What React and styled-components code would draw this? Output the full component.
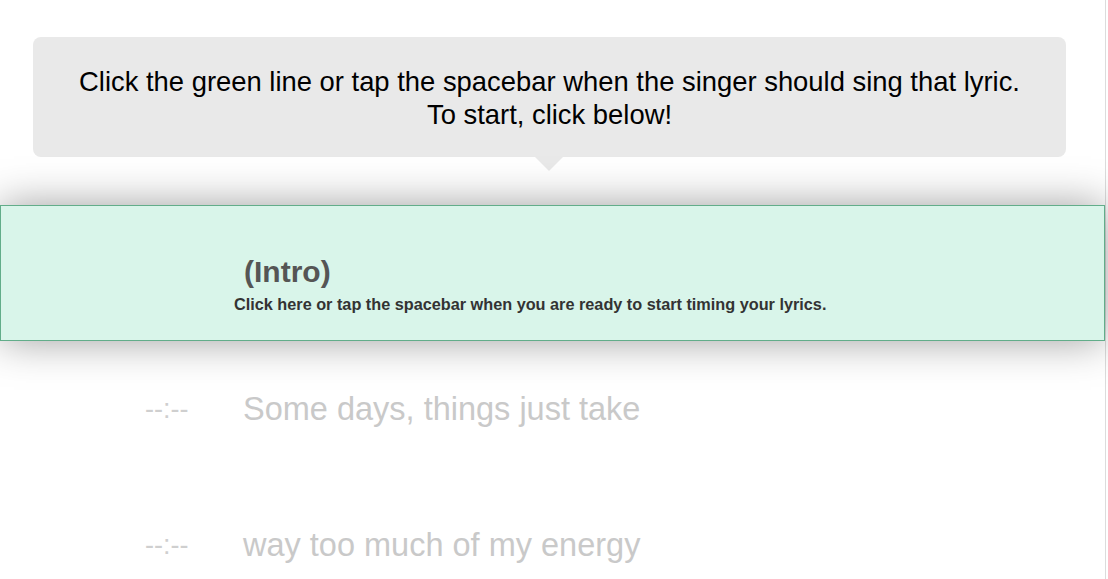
import React from 'react';
import styled, { createGlobalStyle } from 'styled-components';

const GlobalStyle = createGlobalStyle`
  html, body {
    margin: 0;
    padding: 0;
    overflow: hidden;
    background: #fff;
    font-family: "Liberation Sans", Arial, sans-serif;
  }
`;

const Page = styled.div`
  width: 1105px;
  min-height: 100vh;
  border-right: 1px solid #dcdcdc;
  padding-top: 37px;
`;

const Bubble = styled.div`
  position: relative;
  width: 1033px;
  margin-left: 33px;
  box-sizing: border-box;
  padding: 28px 10px 26px;
  background: #e9e9e9;
  border-radius: 8px;
  text-align: center;
  font-size: 27.4px;
  line-height: 33px;
  color: #000;

  &::after {
    content: '';
    position: absolute;
    left: 50%;
    bottom: -14px;
    margin-left: -15px;
    border-left: 14px solid transparent;
    border-right: 14px solid transparent;
    border-top: 14px solid #e9e9e9;
  }
`;

const Lines = styled.div`
  margin-top: 48px;
`;

const ActiveRow = styled.div`
  position: relative;
  z-index: 1;
  height: 136px;
  box-sizing: border-box;
  padding: 49px 0 0 243px;
  background: #d9f5ea;
  border: 1px solid #62ad8a;
  box-shadow: 0 0 40px rgba(0, 0, 0, 0.38);
  cursor: pointer;
`;

const Title = styled.div`
  font-size: 30px;
  line-height: 34px;
  font-weight: bold;
  color: #555;
`;

const Hint = styled.div`
  margin: 5px 0 0 -10px;
  font-size: 16.25px;
  line-height: 20px;
  font-weight: bold;
  color: #333;
`;

const Row = styled.div`
  display: grid;
  grid-template-columns: 98px 1fr;
  align-items: center;
  height: 136px;
  padding-left: 145px;
`;

const Time = styled.span`
  font-size: 27px;
  color: #cfcfcf;
  font-weight: 300;
`;

const Lyric = styled.span`
  font-size: 32.5px;
  line-height: 40px;
  color: #c9c9c9;
`;

const lyrics = ['Some days, things just take', 'way too much of my energy'];

export default function App() {
  return (
    <Page>
      <GlobalStyle />
      <Bubble>
        Click the green line or tap the spacebar when the singer should sing that lyric.
        <br />
        To start, click below!
      </Bubble>
      <Lines>
        <ActiveRow>
          <Title>(Intro)</Title>
          <Hint>Click here or tap the spacebar when you are ready to start timing your lyrics.</Hint>
        </ActiveRow>
        {lyrics.map((text, i) => (
          <Row key={i}>
            <Time>--:--</Time>
            <Lyric>{text}</Lyric>
          </Row>
        ))}
      </Lines>
    </Page>
  );
}
